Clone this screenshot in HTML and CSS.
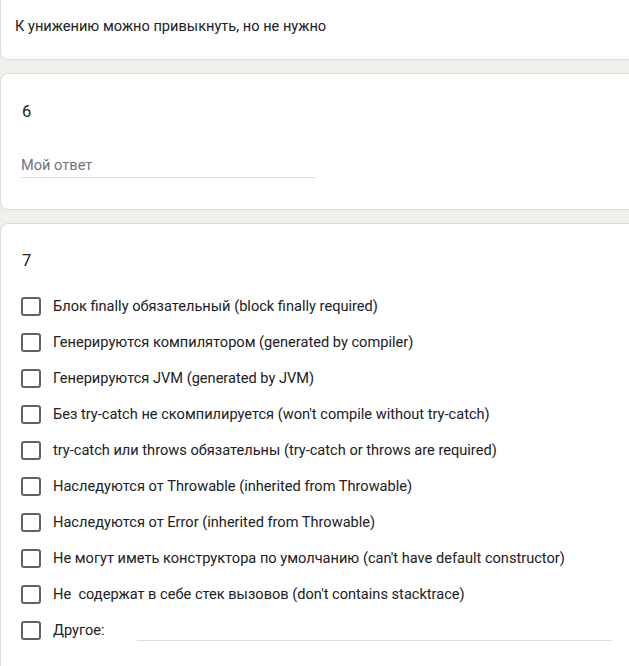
FILE: index.html
```html
<!DOCTYPE html>
<html lang="ru">
<head>
<meta charset="utf-8">
<link rel="stylesheet" href="styles.css">
</head>
<body>
<div class="card card-first">
  <div class="desc">К унижению можно привыкнуть, но не нужно</div>
</div>
<div class="card card-short">
  <div class="qtitle">6</div>
  <div class="answer">Мой ответ</div>
</div>
<div class="card card-last">
  <div class="qtitle">7</div>
  <div class="options">
    <label class="opt"><span class="box"></span><span class="lbl">Блок finally обязательный (block finally required)</span></label>
    <label class="opt"><span class="box"></span><span class="lbl">Генерируются компилятором (generated by compiler)</span></label>
    <label class="opt"><span class="box"></span><span class="lbl">Генерируются JVM (generated by JVM)</span></label>
    <label class="opt"><span class="box"></span><span class="lbl">Без try-catch не скомпилируется (won't compile without try-catch)</span></label>
    <label class="opt"><span class="box"></span><span class="lbl">try-catch или throws обязательны (try-catch or throws are required)</span></label>
    <label class="opt"><span class="box"></span><span class="lbl">Наследуются от Throwable (inherited from Throwable)</span></label>
    <label class="opt"><span class="box"></span><span class="lbl">Наследуются от Error (inherited from Throwable)</span></label>
    <label class="opt"><span class="box"></span><span class="lbl">Не могут иметь конструктора по умолчанию (can't have default constructor)</span></label>
    <label class="opt"><span class="box"></span><span class="lbl">Не&nbsp; содержат в себе стек вызовов (don't contains stacktrace)</span></label>
    <label class="opt"><span class="box"></span><span class="lbl other">Другое:</span><span class="other-line"></span></label>
  </div>
</div>
</body>
</html>
```

FILE: styles.css
```css
html, body {
  margin: 0;
  padding: 0;
}
body {
  background: #f0efec;
  font-family: Roboto, "Noto Sans", sans-serif;
  color: #202124;
  width: 629px;
  height: 666px;
  overflow: hidden;
  display: flex;
  flex-direction: column;
}
.card {
  background: #fff;
  border: 1px solid #dadce0;
  border-radius: 8px;
  margin-right: -20px;
  flex-shrink: 0;
}
.card-first {
  border-top: none;
  border-radius: 0 0 8px 8px;
  height: 60px;
  box-sizing: border-box;
  padding: 16px 14px 0;
}
.desc {
  font-size: 14.6px;
  line-height: 20px;
}
.card-short {
  margin-top: 13px;
  height: 137px;
  box-sizing: border-box;
  padding: 26px 20px 0;
}
.qtitle {
  font-size: 16.5px;
  line-height: 24px;
  padding-left: 1px;
}
.answer {
  margin-top: 31px;
  width: 295px;
  font-size: 14.6px;
  line-height: 20px;
  color: #70757a;
  padding-bottom: 2px;
  border-bottom: 1px solid #dadce0;
}
.card-last {
  margin-top: 13px;
  padding: 25px 20px 40px;
  flex-grow: 1;
}
.options {
  margin-top: 23px;
  display: flex;
  flex-direction: column;
  gap: 16px;
}
.opt {
  display: flex;
  align-items: center;
  height: 20px;
  font-size: 14.6px;
}
.box {
  width: 20px;
  height: 19px;
  box-sizing: border-box;
  border: 2px solid #5f6368;
  border-radius: 3px;
  margin-right: 12px;
  flex-shrink: 0;
}
.lbl {
  white-space: nowrap;
  line-height: 20px;
}
.other-line {
  display: block;
  width: 475px;
  margin-left: 32px;
  margin-top: 21px;
  border-bottom: 1px solid #dadce0;
}
```
